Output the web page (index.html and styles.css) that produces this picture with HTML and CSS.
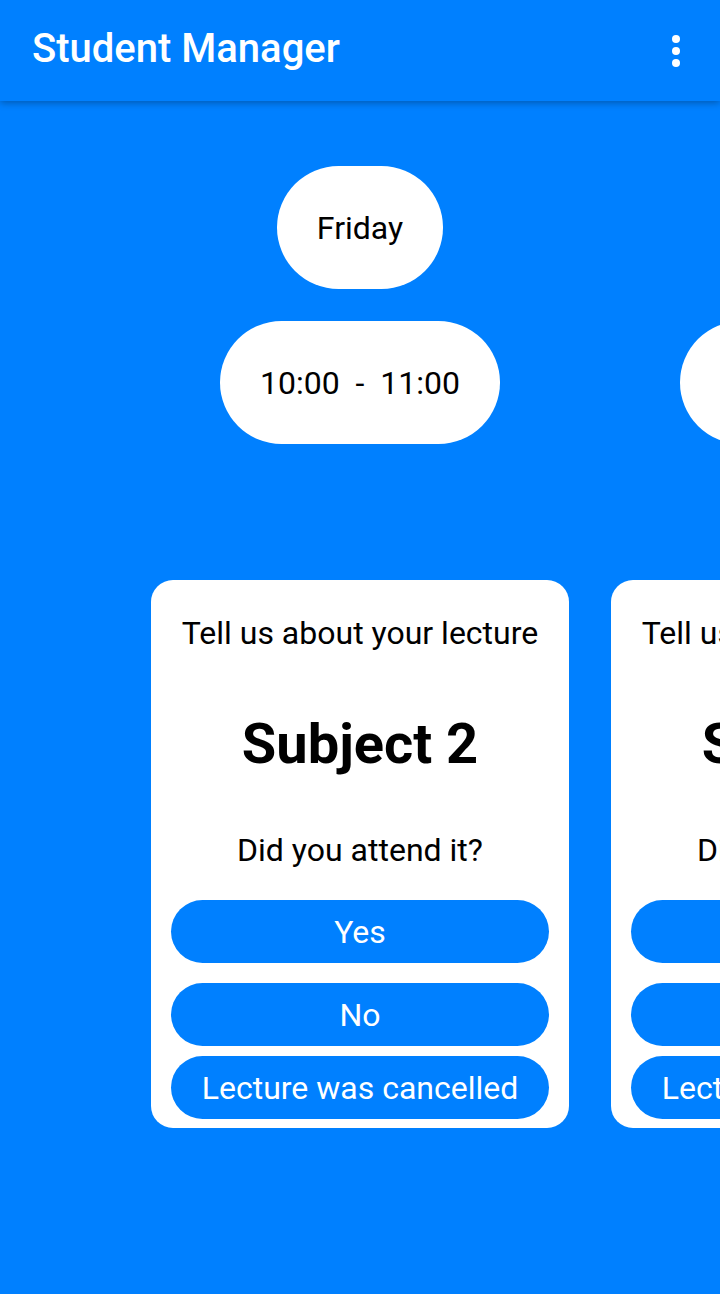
FILE: index.html
```html
<!DOCTYPE html>
<html lang="en">

<head>
    <meta charset="UTF-8">
    <meta name="viewport" content="width=device-width, initial-scale=1.0">
    <title>Student Manager</title>
    <link rel="stylesheet" href="styles.css">
</head>

<body>
    <header class="toolbar">
        <div class="toolbar-title">Student Manager</div>
        <button class="menu-button" aria-label="More options">
            <svg width="8" height="32" viewBox="0 0 8 32">
                <circle cx="4" cy="4" r="4" fill="#fff" />
                <circle cx="4" cy="16" r="4" fill="#fff" />
                <circle cx="4" cy="28" r="4" fill="#fff" />
            </svg>
        </button>
    </header>

    <main class="content">
        <div class="day-row">
            <div class="pill">Friday</div>
        </div>

        <div class="pager time-pager">
            <div class="page">
                <div class="pill">10:00&nbsp;&nbsp;-&nbsp;&nbsp;11:00</div>
            </div>
            <div class="page">
                <div class="pill">11:00&nbsp;&nbsp;-&nbsp;&nbsp;12:00</div>
            </div>
        </div>

        <div class="pager card-pager">
            <div class="page">
                <div class="card">
                    <p class="card-intro">Tell us about your lecture</p>
                    <h2 class="card-subject">Subject 2</h2>
                    <p class="card-question">Did you attend it?</p>
                    <button class="answer answer-yes">Yes</button>
                    <button class="answer answer-no">No</button>
                    <button class="answer answer-cancelled">Lecture was cancelled</button>
                </div>
            </div>
            <div class="page">
                <div class="card">
                    <p class="card-intro">Tell us about your lecture</p>
                    <h2 class="card-subject">Subject 3</h2>
                    <p class="card-question">Did you attend it?</p>
                    <button class="answer answer-yes">Yes</button>
                    <button class="answer answer-no">No</button>
                    <button class="answer answer-cancelled">Lecture was cancelled</button>
                </div>
            </div>
        </div>
    </main>
</body>

</html>
```

FILE: styles.css
```css
body {
    margin: 0;
    height: 1294px;
    overflow: hidden;
    background-color: #0080FF;
    font-family: Roboto, "Noto Sans", sans-serif;
    color: #000000;
}

.toolbar {
    position: relative;
    z-index: 1;
    height: 101px;
    box-sizing: border-box;
    padding: 0 40px 4px 32px;
    display: flex;
    align-items: center;
    justify-content: space-between;
    background-color: #0080FF;
    box-shadow: 0 2px 7px rgba(0, 0, 0, 0.3);
}

.toolbar-title {
    color: #ffffff;
    font-size: 40px;
    font-weight: 500;
    line-height: 97px;
}

.menu-button {
    display: flex;
    padding: 0;
    margin-top: 4px;
    border: none;
    background: none;
}

.content {
    padding-top: 65px;
}

.day-row {
    display: flex;
    justify-content: center;
}

.pill {
    height: 123px;
    box-sizing: border-box;
    padding: 2px 40px 0 40px;
    border-radius: 62px;
    background-color: #ffffff;
    font-size: 32px;
    line-height: 121px;
    white-space: nowrap;
}

.pager {
    display: flex;
    padding-left: 130px;
    overflow: hidden;
}

.page {
    flex: none;
    width: 460px;
    display: flex;
    justify-content: center;
}

.time-pager {
    margin-top: 32px;
}

.card-pager {
    margin-top: 136px;
}

.card {
    width: 418px;
    height: 548px;
    box-sizing: border-box;
    padding: 34px 20px 0 20px;
    display: flex;
    flex-direction: column;
    border-radius: 22px;
    background-color: #ffffff;
    text-align: center;
}

.card-intro,
.card-question {
    margin: 0;
    font-size: 32px;
    line-height: 38px;
    white-space: nowrap;
}

.card-subject {
    margin: 59px 0 0 0;
    font-size: 56px;
    font-weight: 700;
    line-height: 66px;
    white-space: nowrap;
}

.card-question {
    margin-top: 54px;
}

.answer {
    height: 63px;
    box-sizing: border-box;
    padding: 2px 0 0 0;
    border: none;
    border-radius: 32px;
    background-color: #0080FF;
    color: #ffffff;
    font-family: Roboto, "Noto Sans", sans-serif;
    font-size: 32px;
    line-height: 61px;
    white-space: nowrap;
}

.answer-yes {
    margin-top: 31px;
}

.answer-no {
    margin-top: 20px;
}

.answer-cancelled {
    margin-top: 10px;
}
```
